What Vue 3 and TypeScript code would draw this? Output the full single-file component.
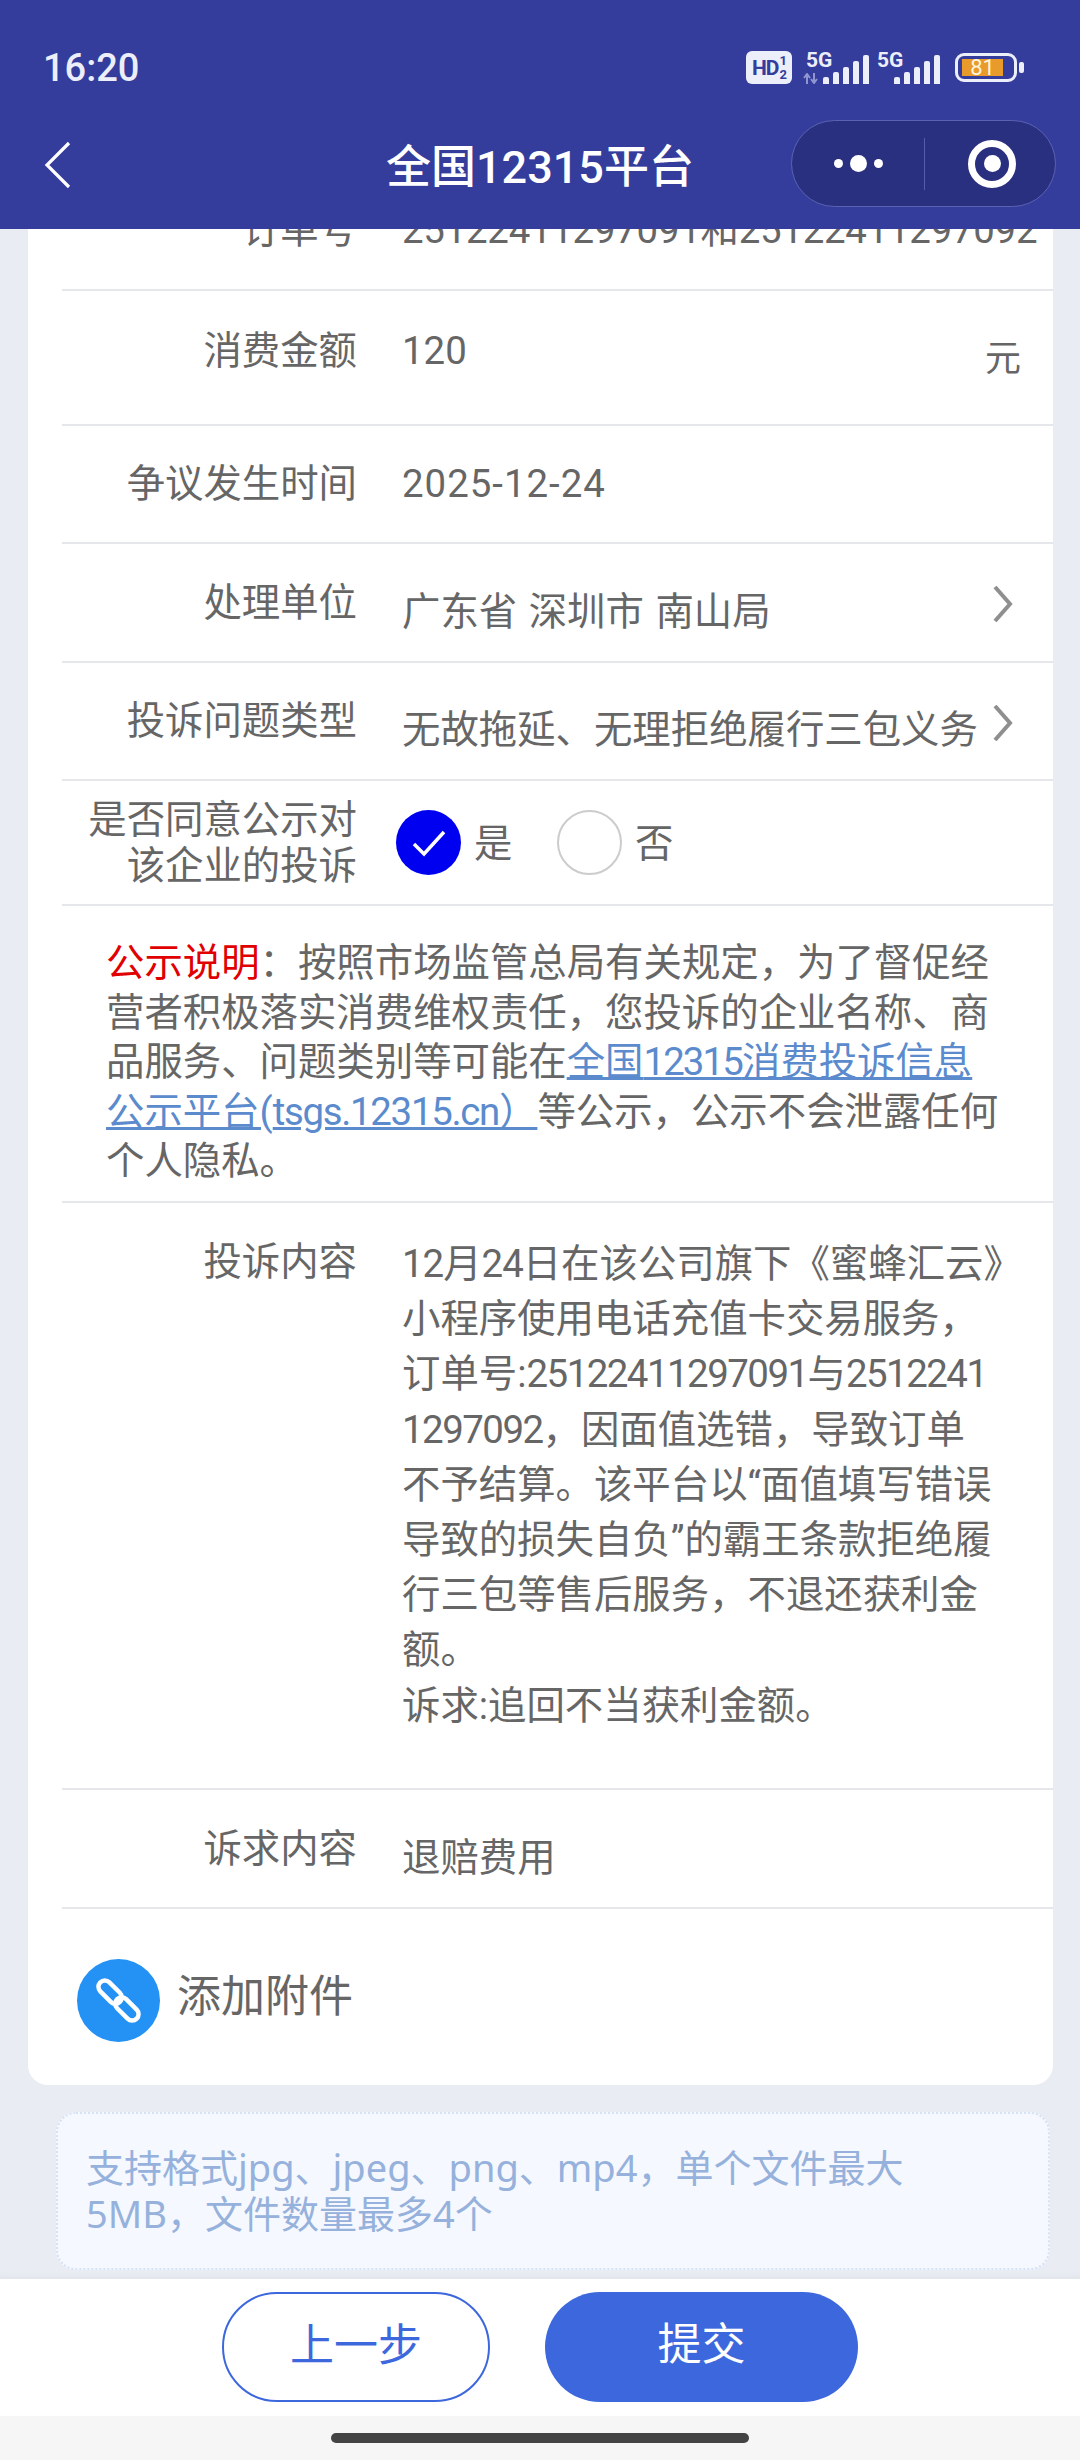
<template>
  <div class="page">
    <header class="topbar">
      <div class="status">
        <span class="time">16:20</span>
        <div class="status-icons">
          <span class="hd">HD<span class="hd-nums"><i>1</i><i>2</i></span></span>
          <span class="sim first">
            <span class="sim-label">5G</span>
            <svg class="arrows" width="16" height="11" viewBox="0 0 16 11">
              <path d="M4 11V2M1 5l3-4 3 4M11 0v9M8 6l3 4 3-4" fill="none" stroke="#8f96d0" stroke-width="2" />
            </svg>
            <span class="bars">
              <i v-for="h in barHeights" :key="h" :style="{ height: h + 'px' }"></i>
            </span>
          </span>
          <span class="sim">
            <span class="sim-label">5G</span>
            <span class="bars">
              <i v-for="h in barHeights" :key="h" :style="{ height: h + 'px' }"></i>
            </span>
          </span>
          <span class="battery"><span class="battery-fill">81</span></span>
          <span class="battery-cap"></span>
        </div>
      </div>
      <div class="nav">
        <svg class="back" width="28" height="48" viewBox="0 0 28 48">
          <path d="M25 2L3 24l22 22" fill="none" stroke="#fff" stroke-width="3.2" />
        </svg>
        <h1 class="title">全国12315平台</h1>
        <div class="capsule">
          <span class="dots"><i></i><i class="big"></i><i></i></span>
          <span class="capsule-line"></span>
          <span class="target"><i></i></span>
        </div>
      </div>
    </header>

    <main class="content">
      <section class="card">
        <div class="row row-order">
          <span class="label">订单号</span>
          <span class="value order-no">25122411297091和25122411297092</span>
        </div>
        <div class="row row-amount">
          <span class="label">消费金额</span>
          <span class="value">120</span>
          <span class="unit">元</span>
        </div>
        <div class="row">
          <span class="label">争议发生时间</span>
          <span class="value date">2025-12-24</span>
        </div>
        <div class="row row-unit">
          <span class="label">处理单位</span>
          <span class="value low spaced">广东省 深圳市 南山局</span>
          <svg class="chevron" width="22" height="36" viewBox="0 0 22 36">
            <path d="M3 1l15 17L3 35" fill="none" stroke="#8f8f8f" stroke-width="4" />
          </svg>
        </div>
        <div class="row">
          <span class="label">投诉问题类型</span>
          <span class="value low">无故拖延、无理拒绝履行三包义务</span>
          <svg class="chevron" width="22" height="36" viewBox="0 0 22 36">
            <path d="M3 1l15 17L3 35" fill="none" stroke="#8f8f8f" stroke-width="4" />
          </svg>
        </div>
        <div class="row row-agree">
          <span class="label">是否同意公示对该企业的投诉</span>
          <div class="radios">
            <span class="radio checked">
              <svg width="38" height="30" viewBox="0 0 38 30">
                <path d="M4 16l10 10L34 4" fill="none" stroke="#fff" stroke-width="3.5" />
              </svg>
            </span>
            <span class="radio-text">是</span>
            <span class="radio"></span>
            <span class="radio-text">否</span>
          </div>
        </div>
        <p class="notice">
          <span class="red">公示说明</span>：按照市场监管总局有关规定，为了督促经营者积极落实消费维权责任，您投诉的企业名称、商品服务、问题类别等可能在<a class="link">全国<span class="tight">12315</span>消费投诉信息公示平台(<span class="tighter">tsgs.12315.cn</span>）</a>等公示，公示不会泄露任何个人隐私。
        </p>
        <div class="row row-text">
          <span class="label">投诉内容</span>
          <p class="long"><span class="day">12</span>月<span class="day">24</span>日在该公司旗下《蜜蜂汇云》小程序使用电话充值卡交易服务，订单号:<span class="num">25122411297091</span>与<span class="num">25122411297092</span>，因面值选错，导致订单不予结算。该平台以“面值填写错误导致的损失自负”的霸王条款拒绝履行三包等售后服务，不退还获利金额。<br />诉求:追回不当获利金额。</p>
        </div>
        <div class="row row-unit">
          <span class="label">诉求内容</span>
          <span class="value low">退赔费用</span>
        </div>
        <div class="attach">
          <span class="attach-icon">
            <svg width="83" height="83" viewBox="0 0 84 84">
              <g fill="none" stroke="#fff" stroke-width="4.5">
                <rect x="-14" y="-6.5" width="28" height="13" rx="6.5" transform="translate(33.5 33.5) rotate(45)" />
                <rect x="-14" y="-6.5" width="28" height="13" rx="6.5" transform="translate(50.5 50.5) rotate(45)" />
              </g>
            </svg>
          </span>
          <span class="attach-text">添加附件</span>
        </div>
      </section>
      <div class="tip">支持格式jpg、jpeg、png、mp4，单个文件最大5MB，文件数量最多4个</div>
    </main>

    <footer class="footer">
      <button class="btn ghost">上一步</button>
      <button class="btn solid">提交</button>
    </footer>
    <div class="home"><span></span></div>
  </div>
</template>

<script setup lang="ts">
// Signal bar heights, shortest first
const barHeights: number[] = [7, 12, 17, 23, 29];
</script>

<style>
html, body {
  margin: 0;
  background: #e9ecf2;
}
</style>

<style scoped>
.page {
  width: 1080px;
  height: 2460px;
  display: flex;
  flex-direction: column;
  overflow: hidden;
  font-family: Roboto, "Noto Sans CJK SC", sans-serif;
  color: #666;
  background: #e9ecf2;
}

/* Top bar */
.topbar {
  height: 229px;
  flex: none;
  background: #343c9c;
  color: #fff;
  position: relative;
  z-index: 2;
}

.status {
  height: 120px;
  padding: 15px 56px 0 43px;
  box-sizing: border-box;
  display: flex;
  align-items: center;
  justify-content: space-between;
}

.time {
  font-size: 38px;
  font-weight: 500;
  color: #eceefa;
}

.status-icons {
  display: flex;
  align-items: center;
  color: #eceefa;
}

.hd {
  width: 46px;
  height: 33px;
  border-radius: 6px;
  background: #eceefa;
  color: #343c9c;
  font-size: 21px;
  font-weight: 700;
  display: flex;
  align-items: center;
  justify-content: center;
  letter-spacing: -1px;
  margin-right: 11px;
}

.hd-nums {
  display: flex;
  flex-direction: column;
  font-size: 13px;
  line-height: 14px;
  margin-left: 1px;
}

.hd-nums i {
  font-style: normal;
}

.sim {
  position: relative;
  width: 63px;
  height: 32px;
  display: block;
}

.sim.first {
  width: 66px;
  margin-right: 8px;
}

.sim-label {
  position: absolute;
  left: 0;
  top: 0;
  font-size: 21px;
  line-height: 17px;
  font-weight: 700;
}

.sim.first .sim-label {
  left: 3px;
}

.arrows {
  position: absolute;
  left: 0;
  bottom: 0;
}

.bars {
  position: absolute;
  right: 0;
  bottom: 0;
  display: flex;
  align-items: flex-end;
  gap: 4px;
}

.bars i {
  width: 6px;
  background: #eceefa;
  border-radius: 2px 2px 0 0;
}

.battery {
  width: 62px;
  height: 29px;
  border: 3px solid #eceefa;
  border-radius: 9px;
  box-sizing: border-box;
  padding: 3px 4px;
  margin-left: 15px;
  display: block;
}

.battery-fill {
  width: 41px;
  height: 17px;
  background: #e89a2a;
  color: #fff4dd;
  font-size: 22px;
  line-height: 17px;
  text-align: center;
  display: block;
}

.battery-cap {
  width: 5px;
  height: 11px;
  background: #eceefa;
  border-radius: 2px;
  margin-left: 2px;
}

.nav {
  height: 109px;
  padding-bottom: 22px;
  box-sizing: border-box;
  position: relative;
  display: flex;
  align-items: center;
  justify-content: center;
}

.back {
  position: absolute;
  left: 44px;
  top: 21px;
}

.title {
  margin: 0;
  font-size: 45px;
  font-weight: 500;
  color: #fff;
}

.capsule {
  position: absolute;
  right: 24px;
  top: 0;
  width: 265px;
  height: 87px;
  border: 1px solid #5a62b4;
  border-radius: 44px;
  background: #2a3080;
  box-sizing: border-box;
  display: flex;
  align-items: center;
}

.dots {
  width: 132px;
  display: flex;
  align-items: center;
  justify-content: center;
  gap: 7px;
}

.dots i {
  width: 9px;
  height: 9px;
  border-radius: 50%;
  background: #fff;
}

.dots i.big {
  width: 17px;
  height: 17px;
}

.capsule-line {
  width: 1px;
  height: 52px;
  background: #555cad;
}

.target {
  flex: 1;
  padding-left: 4px;
  display: flex;
  align-items: center;
  justify-content: center;
}

.target i {
  width: 48px;
  height: 48px;
  border-radius: 50%;
  border: 7px solid #fff;
  box-sizing: border-box;
  display: flex;
  align-items: center;
  justify-content: center;
}

.target i::after {
  content: "";
  width: 17px;
  height: 17px;
  border-radius: 50%;
  background: #fff;
}

/* Form card */
.content {
  flex: 1;
  min-height: 0;
  overflow: hidden;
  box-shadow: inset 0 -8px 8px -8px rgba(0, 0, 0, 0.06);
}

.card {
  margin: -58px 27px 0 28px;
  padding: 0 0 0 34px;
  background: #fff;
  border-radius: 0 0 20px 20px;
  font-size: 38.4px;
}

.row {
  min-height: 118px;
  box-sizing: border-box;
  border-bottom: 2px solid #e6e7ea;
  display: flex;
  align-items: center;
  position: relative;
}

.row-order {
  min-height: 120px;
}

.row-amount {
  min-height: 135px;
  padding-bottom: 13px;
}

.row-unit {
  min-height: 119px;
}

.label {
  width: 295px;
  flex: none;
  text-align: right;
  line-height: 46px;
  color: #666;
}

.value {
  margin-left: 45px;
  line-height: 46px;
  white-space: nowrap;
}

.value.low {
  position: relative;
  top: 9px;
}

.value.spaced {
  word-spacing: 2px;
}

.value.order-no {
  letter-spacing: -0.25px;
}

.value.date {
  letter-spacing: 1px;
}

.unit {
  position: absolute;
  right: 32px;
  top: 48px;
  font-size: 36px;
  line-height: 40px;
}

.chevron {
  position: absolute;
  right: 39px;
  top: 42px;
}

.row-agree {
  min-height: 125px;
}

.row-agree .label {
  padding-left: 25px;
  width: 270px;
}

.radios {
  display: flex;
  align-items: center;
  margin-left: 39px;
}

.radio {
  width: 65px;
  height: 65px;
  border-radius: 50%;
  border: 2px solid #ccc;
  box-sizing: border-box;
  display: flex;
  align-items: center;
  justify-content: center;
}

.radio.checked {
  background: #0000f0;
  border: 0;
}

.radio-text {
  margin: 0 45px 0 13px;
  width: 38px;
  position: relative;
  top: -3px;
}

.notice {
  margin: 0;
  padding: 32px 50px 0 44px;
  height: 297px;
  box-sizing: border-box;
  line-height: 49.5px;
  border-bottom: 2px solid #e6e7ea;
}

.red {
  color: #e00000;
}

.link {
  color: #5b8bcd;
  text-decoration: underline;
}

.tight {
  letter-spacing: -1.9px;
}

.tighter {
  letter-spacing: -1.3px;
}

.row-text {
  align-items: flex-start;
  min-height: 587px;
  padding-top: 33px;
}

.row-text .label {
  margin-top: 3px;
}

.long {
  margin: 0 0 0 45px;
  width: 601px;
  line-height: 55.2px;
  word-break: break-all;
}

.num {
  letter-spacing: -1.5px;
}

.day {
  letter-spacing: -1px;
}

.attach {
  height: 176px;
  display: flex;
  align-items: center;
  padding: 6px 0 0 15px;
  box-sizing: border-box;
}

.attach-icon {
  width: 83px;
  height: 83px;
  border-radius: 50%;
  background: #2491f5;
  display: flex;
  align-items: center;
  justify-content: center;
}

.attach-text {
  margin-left: 17px;
  font-size: 44px;
  position: relative;
  top: -7px;
}

.tip {
  margin: 27px 30px 0 56px;
  height: 158px;
  box-sizing: border-box;
  padding: 30px 45px 0 28px;
  border: 2px dotted #d6e2f5;
  border-radius: 20px;
  background: #f5f8fe;
  color: #95b1dc;
  font-family: "Noto Sans", "Noto Sans CJK SC", sans-serif;
  font-size: 38px;
  line-height: 46px;
}

/* Footer */
.footer {
  height: 137px;
  flex: none;
  background: #fff;
  display: flex;
  align-items: flex-start;
  padding: 13px 0 0 222px;
  box-sizing: border-box;
  gap: 55px;
}

.btn {
  height: 110px;
  border-radius: 55px;
  font-family: inherit;
  font-size: 44px;
  box-sizing: border-box;
  padding: 0 0 10px;
}

.btn.ghost {
  width: 268px;
  background: #fff;
  border: 2px solid #3d68dd;
  color: #3d68dd;
}

.btn.solid {
  width: 313px;
  padding-bottom: 13px;
  background: #3d68dd;
  border: 0;
  color: #fff;
}

.home {
  height: 44px;
  flex: none;
  background: #f6f6f6;
  display: flex;
  justify-content: center;
  padding-top: 17px;
  box-sizing: border-box;
}

.home span {
  width: 418px;
  height: 10px;
  border-radius: 5px;
  background: #444;
}
</style>
